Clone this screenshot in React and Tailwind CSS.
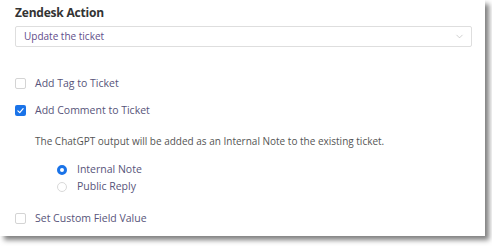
import { ChevronDown } from 'lucide-react';

function Checkbox({ checked }) {
  if (checked) {
    return (
      <span className="flex h-[11px] w-[11px] items-center justify-center rounded-[2px] bg-[#1a73e8]">
        <svg viewBox="0 0 12 12" width="9" height="9" fill="none" stroke="white" strokeWidth="1.6" strokeLinecap="round" strokeLinejoin="round">
          <path d="M2.5 6.5 L5 8.8 L9.5 3.5" />
        </svg>
      </span>
    );
  }
  return <span className="block h-[11px] w-[11px] rounded-[2px] border border-[#d4d4d4] bg-white" />;
}

function Radio({ checked }) {
  return checked
    ? <span className="block h-[10px] w-[10px] rounded-full border-[3px] border-[#1a73e8] bg-white" />
    : <span className="block h-[10px] w-[10px] rounded-full border border-[#d9d9d9] bg-white" />;
}

function CheckRow({ checked, label, className = '' }) {
  return (
    <div className={`flex h-[16px] items-center gap-[9px] ${className}`}>
      <Checkbox checked={checked} />
      <span className="text-[10.5px] leading-[16px] text-[#57547a]">{label}</span>
    </div>
  );
}

export default function App() {
  return (
    <div className="h-[246px] w-[492px] bg-white font-['Open_Sans',sans-serif]">
      <div className="h-[236px] w-[485px] bg-white pl-[15px] pr-[13px] pt-[3px] shadow-[4px_4px_5px_rgba(0,0,0,0.5)]">
        <h2 className="text-[12px] font-bold leading-[20px] tracking-[-0.2px] text-[#333]">Zendesk Action</h2>
        <div className="mt-[3px] flex h-[21px] items-center justify-between rounded-[2px] border border-[#dedede] pl-[8px] pr-[6px]">
          <span className="text-[10px] text-[#5f4d8a]">Update the ticket</span>
          <ChevronDown size={11} className="text-[#bbb]" strokeWidth={1.5} />
        </div>
        <CheckRow label="Add Tag to Ticket" className="mt-[28px]" />
        <CheckRow checked label="Add Comment to Ticket" className="mt-[11px]" />
        <p className="ml-[20px] mt-[16px] text-[10px] leading-[14px] text-[#555]">
          The ChatGPT output will be added as an Internal Note to the existing ticket.
        </p>
        <div className="ml-[42px] mt-[14px] flex flex-col gap-[1px]">
          <div className="flex h-[16px] items-center gap-[10px]">
            <Radio checked />
            <span className="text-[10.5px] text-[#57547a]">Internal Note</span>
          </div>
          <div className="flex h-[16px] items-center gap-[10px]">
            <Radio />
            <span className="text-[10.5px] text-[#57547a]">Public Reply</span>
          </div>
        </div>
        <CheckRow label="Set Custom Field Value" className="mt-[15px]" />
      </div>
    </div>
  );
}
